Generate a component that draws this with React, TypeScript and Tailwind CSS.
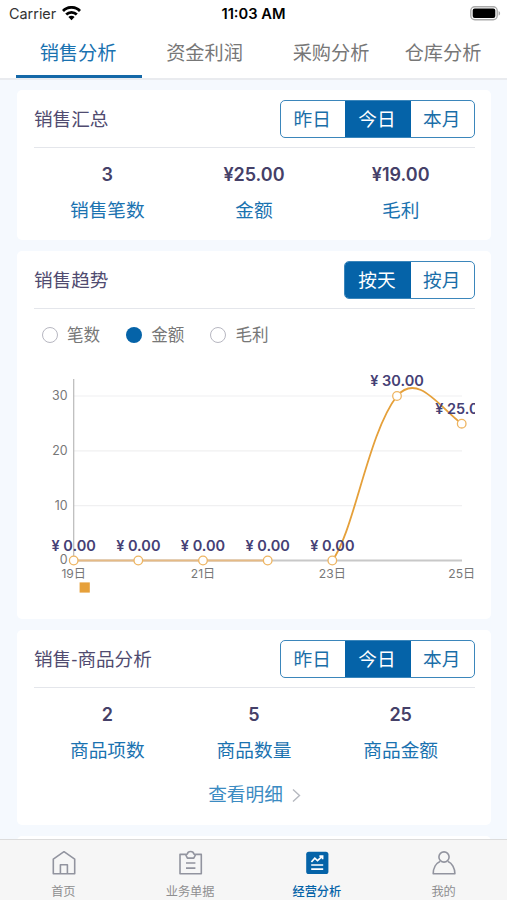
import React from 'react';

const tabs = ['销售分析', '资金利润', '采购分析', '仓库分析'];

const points = [
  { x: 73.7, y: 560.5, label: '¥ 0.00' },
  { x: 138.3, y: 560.5, label: '¥ 0.00' },
  { x: 203, y: 560.5, label: '¥ 0.00' },
  { x: 267.7, y: 560.5, label: '¥ 0.00' },
  { x: 332.3, y: 560.5, label: '¥ 0.00' },
  { x: 397, y: 396, label: '¥ 30.00' },
  { x: 461.7, y: 423.7, label: '¥ 25.00' },
];

const yTicks = [
  { y: 396, label: '30' },
  { y: 450.8, label: '20' },
  { y: 505.6, label: '10' },
  { y: 560.5, label: '0' },
];

const xTicks = [
  { x: 73.7, label: '19日' },
  { x: 203, label: '21日' },
  { x: 332.3, label: '23日' },
  { x: 461.7, label: '25日' },
];

function StatusBar() {
  return (
    <div className="relative flex h-7 items-center justify-between pl-[9px] pr-[6px] text-black">
      <div className="flex items-center gap-[6px]">
        <span className="text-[14.4px] leading-none text-[#333]">Carrier</span>
        <svg className="mb-[2px]" width="19" height="15" viewBox="0 0 19 15" fill="none" stroke="#000" strokeWidth="2.8">
          <path d="M1 4.9a12 12 0 0 1 17 0" />
          <path d="M4.2 8.6a7.5 7.5 0 0 1 10.6 0" />
          <path d="M9.5 14.2 6.4 11.1a4.4 4.4 0 0 1 6.2 0z" fill="#000" stroke="none" />
        </svg>
      </div>
      <span className="absolute inset-x-0 text-center text-[14.7px] font-semibold leading-none">11:03 AM</span>
      <svg className="mb-[2px]" width="31" height="15" viewBox="0 0 31 15">
        <rect x="0.8" y="0.8" width="26.4" height="12.9" rx="4" fill="#fff" stroke="#aaa" strokeWidth="1.4" />
        <rect x="2.7" y="2.6" width="22.6" height="9.4" rx="2" fill="#000" />
        <path d="M28.6 5v4.6c2-.8 2-3.8 0-4.6z" fill="#aaa" />
      </svg>
    </div>
  );
}

function Segmented({ items, active }: { items: string[]; active: number }) {
  return (
    <div className="flex h-[38px] overflow-hidden rounded-[5px] border-[1.5px] border-[#3b86bb] bg-white text-[18.7px] text-[#1a6ea8]">
      {items.map((item, i) => (
        <span
          key={item}
          className={
            i === active
              ? 'flex w-[66px] items-center justify-center bg-[#0563a8] pr-[1px] pt-[3px] text-white'
              : 'flex w-[63.5px] items-center justify-center pr-[1px] pt-[3px]'
          }
        >
          {item}
        </span>
      ))}
    </div>
  );
}

function Card({ title, items, active, className, children }: {
  title: string;
  items: string[];
  active: number;
  className: string;
  children: React.ReactNode;
}) {
  return (
    <section className={`rounded-[5px] bg-white pl-[17px] pr-4 ${className}`}>
      <div className="flex h-[58px] items-center justify-between border-b-[1.5px] border-[#e4e6eb]">
        <h2 className="pt-[3px] font-['Liberation_Sans','Noto_Sans_CJK_SC',sans-serif] text-[18.6px] text-[#504b70]">{title}</h2>
        <Segmented items={items} active={active} />
      </div>
      {children}
    </section>
  );
}

function Stats({ items }: { items: string[][] }) {
  return (
    <div className="grid grid-cols-3 pr-[1px] pt-[9px] text-center">
      {items.map(([value, label]) => (
        <div key={label}>
          <div className="h-9 text-[18px] font-semibold leading-[36px] text-[#454068]">{value}</div>
          <div className="h-[35px] text-[18.7px] leading-[35px] text-[#1a72b0]">{label}</div>
        </div>
      ))}
    </div>
  );
}

function TrendChart() {
  return (
    <svg className="block" width="441" height="240" viewBox="34 360 441 240">
      {yTicks.map((t) => (
        <g key={t.label}>
          {t.label !== '0' && <path d={`M74 ${t.y}H462`} stroke="#f0f0f1" strokeWidth="1.2" />}
          <text x="67.5" y={t.y + 3.9} textAnchor="end" fontSize="12.4" fill="#777">{t.label}</text>
        </g>
      ))}
      <path d="M73.7 379V560.5" stroke="#bababa" strokeWidth="1.2" />
      <path d="M73.7 560.5H462" stroke="#c8c8c8" strokeWidth="1.8" />
      {xTicks.map((t) => (
        <text key={t.label} x={t.x} y="577.7" textAnchor="middle" fontSize="12.1" fill="#777">{t.label}</text>
      ))}
      <path d="M73.7 560.5H267.7" stroke="#e5ba85" strokeWidth="1.8" />
      <path
        d="M332.3 560.5C354 532 368 433 397 396C418 372 440 408 461.7 423.7"
        fill="none"
        stroke="#e5a03a"
        strokeWidth="1.8"
      />
      {points.map((p) => (
        <g key={p.x}>
          <circle cx={p.x} cy={p.y} r="4.3" fill="#fff" stroke="#eeb562" strokeWidth="1.3" />
          <text x={p.x} y={p.y - 10} textAnchor="middle" fontSize="14.5" fontWeight="600" fill="#454075">
            {p.label}
          </text>
        </g>
      ))}
      <rect x="79.6" y="582.4" width="10.2" height="10.2" fill="#e6a03a" />
    </svg>
  );
}

function BottomNav() {
  return (
    <nav className="grid h-[61px] shrink-0 grid-cols-4 border-t-[1.5px] border-[#dcdcdc] bg-[#f6f6f6] text-[12.2px] leading-[18px] text-[#8e8e90]">
      <div className="flex flex-col items-center pt-[10px]">
        <svg width="26" height="26" viewBox="0 0 26 26" fill="none" stroke="#92949f" strokeWidth="1.6" strokeLinejoin="round">
          <path d="M3.3 9.2 14 1.7l10.7 7.5v14.5H3.3z" />
          <path d="M10.4 23.5v-8.7h7v8.7" />
        </svg>
        <span className="pt-[7px]">首页</span>
      </div>
      <div className="flex flex-col items-center pt-[10px]">
        <svg width="26" height="26" viewBox="0 0 26 26" fill="none" stroke="#92949f" strokeWidth="1.6" strokeLinejoin="round">
          <path d="M8.9 4.4H3v19.3h21.3V4.4h-6" />
          <path d="M8.9 5.2c0-.8.6-1.2 1.4-1.2.6-3.4 6-3.4 6.6 0 .8 0 1.4.4 1.4 1.2l-1.5 2.9h-6.4z" />
          <path d="M9 13h9.4M9 18.1h9.4" />
        </svg>
        <span className="pt-[7px]">业务单据</span>
      </div>
      <div className="flex flex-col items-center pt-[10px] font-medium text-[#0563a8]">
        <svg width="26" height="26" viewBox="0 0 26 26" fill="none" stroke="#fff" strokeWidth="1.7">
          <rect x="2.2" y="1.7" width="22.2" height="22.4" rx="2.6" fill="#0563a8" stroke="none" />
          <path d="m7.4 12 3.4-3.8 2.7 2.4 4.7-4.3M15.4 6.1h3.2v3.1" />
          <path d="M7.2 15h12M7.2 19.2h12" />
        </svg>
        <span className="pt-[7px]">经营分析</span>
      </div>
      <div className="flex flex-col items-center pt-[10px]">
        <svg width="26" height="26" viewBox="0 0 26 26" fill="none" stroke="#92949f" strokeWidth="1.6" strokeLinejoin="round">
          <circle cx="13" cy="7" r="5.1" />
          <path d="M9 11.4C5 13 2.2 18 2.2 23.8h21.7c0-5.8-2.9-10.8-6.9-12.4" />
        </svg>
        <span className="pt-[7px]">我的</span>
      </div>
    </nav>
  );
}

export default function App() {
  return (
    <div className="flex h-[900px] w-[507px] flex-col overflow-hidden bg-[#f5f9fe] font-['Inter','Noto_Sans_CJK_SC',sans-serif]">
      <header className="h-20 shrink-0 border-b-2 border-[#e9ebef] bg-white">
        <StatusBar />
        <div className="grid h-[50px] grid-cols-[126px_126px_127px_97px] pl-[15.5px] text-[19.2px] text-[#777]">
          {tabs.map((tab, i) => (
            <div
              key={tab}
              className={
                i === 0
                  ? 'flex items-center justify-center border-b-[3px] border-[#1468a8] pr-[1px] pt-[3px] text-[#1a72b0]'
                  : 'flex items-center justify-center'
              }
            >
              {tab}
            </div>
          ))}
        </div>
      </header>

      <main className="flex min-h-0 flex-1 flex-col gap-[11px] overflow-hidden px-4 pt-[10px] pl-[17px]">
        <Card className="h-[150px] shrink-0" title="销售汇总" items={['昨日', '今日', '本月']} active={1}>
          <Stats items={[['3', '销售笔数'], ['¥25.00', '金额'], ['¥19.00', '毛利']]} />
        </Card>

        <Card className="h-[368px] shrink-0" title="销售趋势" items={['按天', '按月']} active={0}>
          <div className="flex h-[51px] items-center gap-[26px] pl-2 pt-[2px] text-[16.6px] text-[#777]">
            {['笔数', '金额', '毛利'].map((name) => (
              <label key={name} className="flex items-center gap-[9px]">
                <span
                  className={
                    name === '金额'
                      ? 'h-4 w-4 rounded-full bg-[#0563a8]'
                      : 'h-4 w-4 rounded-full border-[1.5px] border-[#b7b7c1]'
                  }
                />
                {name}
              </label>
            ))}
          </div>
          <TrendChart />
        </Card>

        <Card className="h-[195px] shrink-0" title="销售-商品分析" items={['昨日', '今日', '本月']} active={1}>
          <Stats items={[['2', '商品项数'], ['5', '商品数量'], ['25', '商品金额']]} />
          <div className="flex items-center justify-center gap-[9px] pt-[13px] text-[18.7px] text-[#3b8bc2]">
            <span>查看明细</span>
            <svg width="9" height="15" viewBox="0 0 9 15" fill="none" stroke="#b5b8bf" strokeWidth="1.4">
              <path d="m1 1.5 6.5 6L1 13.5" />
            </svg>
          </div>
        </Card>

        <section className="h-10 shrink-0 rounded-[5px] bg-white" />
      </main>

      <BottomNav />
    </div>
  );
}
